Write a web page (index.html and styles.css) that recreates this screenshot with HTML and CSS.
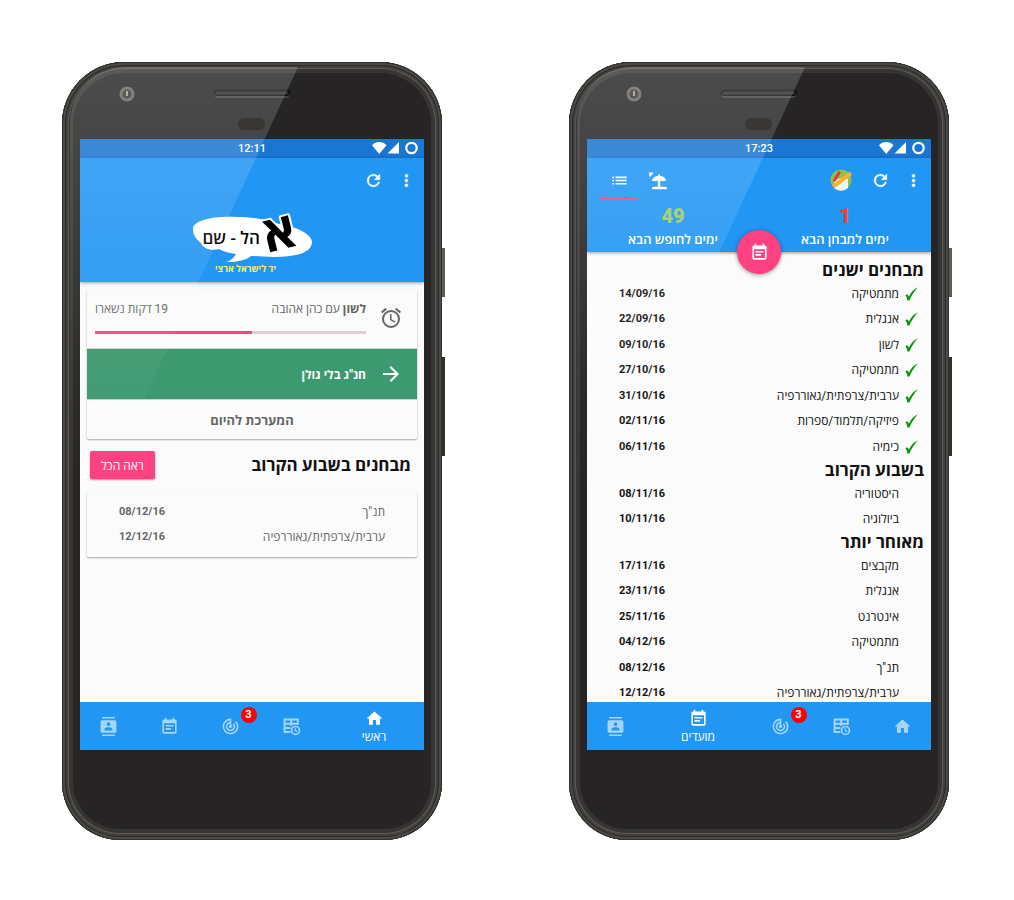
FILE: index.html
```html
<!DOCTYPE html>
<html lang="he">
<head>
<meta charset="utf-8">
<meta name="viewport" content="width=device-width, initial-scale=1">
<title>אהל - שם</title>
<link rel="stylesheet" href="styles.css">
</head>
<body>
<svg class="sprite" aria-hidden="true">
  <symbol id="i-refresh" viewBox="0 0 24 24"><path d="M17.65 6.35A7.96 7.96 0 0 0 12 4a8 8 0 1 0 7.73 10h-2.08A6 6 0 1 1 12 6c1.66 0 3.14.69 4.22 1.78L13 11h7V4z" stroke="currentColor" stroke-width=".6"/></symbol>
  <symbol id="i-more" viewBox="0 0 24 24"><path d="M12 8a2 2 0 1 0 0-4 2 2 0 0 0 0 4zm0 2a2 2 0 1 0 0 4 2 2 0 0 0 0-4zm0 6a2 2 0 1 0 0 4 2 2 0 0 0 0-4z" stroke="currentColor" stroke-width=".5"/></symbol>
  <symbol id="i-home" viewBox="0 0 24 24"><path d="M10 20v-6h4v6h5v-8h3L12 3 2 12h3v8z"/></symbol>
  <symbol id="i-contacts" viewBox="0 0 24 24"><path d="M20 0H4v2h16V0zM4 24h16v-2H4v2zM20 4H4a2 2 0 0 0-2 2v12c0 1.100.9 2 2 2h16a2 2 0 0 0 2-2V6a2 2 0 0 0-2-2zm-8 2.750a2.250 2.250 0 1 1 0 4.500 2.250 2.250 0 0 1 0-4.500zM17 17H7v-1.500c0-1.670 3.330-2.500 5-2.500s5 .830 5 2.500V17z"/></symbol>
  <symbol id="i-event" viewBox="0 0 24 24"><path d="M17 10H7v2h10v-2zm2-7h-1V1h-2v2H8V1H6v2H5a2 2 0 0 0-2 2v14c0 1.100.9 2 2 2h14a2 2 0 0 0 2-2V5a2 2 0 0 0-2-2zm0 16H5V8h14v11zm-5-5H7v2h7v-2z"/></symbol>
  <symbol id="i-track" viewBox="0 0 24 24"><path d="M19.070 4.930l-1.410 1.410A8 8 0 1 1 11 4.070v2.020a6 6 0 1 0 5.240 1.670l-1.410 1.410A4 4 0 1 1 11 8.140v2.140a2 2 0 1 0 2 0V2h-1a10 10 0 1 0 7.070 2.930z"/></symbol>
  <symbol id="i-table" viewBox="0 0 24 24"><path d="M10.500 19H3.200V3.200H20V10M3 8.600h17M3 13.800h7.500M11.600 3v8.500" fill="none" stroke="currentColor" stroke-width="2.400"/><circle cx="17" cy="17" r="5" fill="none" stroke="currentColor" stroke-width="2.200"/><path d="M16.800 14.200v3l2.200 1.500" fill="none" stroke="currentColor" stroke-width="1.600"/></symbol>
  <symbol id="i-alarm" viewBox="0 0 24 24"><path d="M22 5.720l-4.600-3.860-1.290 1.530 4.600 3.860L22 5.720zM7.880 3.390L6.600 1.860 2 5.710l1.290 1.530 4.590-3.850zM12.500 8H11v6l4.750 2.850.75-1.230-4-2.370V8zM12 4a9 9 0 1 0 0 18 9 9 0 0 0 0-18zm0 16a7 7 0 1 1 0-14 7 7 0 0 1 0 14z"/></symbol>
  <symbol id="i-arrow" viewBox="0 0 24 24"><path d="M12 4l-1.410 1.410L16.170 11H4v2h12.170l-5.580 5.590L12 20l8-8z"/></symbol>
  <symbol id="i-list" viewBox="0 0 24 24"><path d="M3 9h2V7H3v2zm0 4h2v-2H3v2zm0 4h2v-2H3v2zm4 0h14v-2H7v2zm0-4h14v-2H7v2zm0-6v2h14V7H7z"/></symbol>
  <symbol id="i-beach" viewBox="0 0 24 24"><path d="M1 2h6L5 5 2 8zM5 13c0-4 4-6.500 8-7V4h2v2c4 .5 8 3 8 7-1-1-3-1-4 0-1-1-2.500-1-3.500-.5V20H22c1 0 2 1 2 2v1H5v-1c0-1 1-2 2-2h5.500v-7.500C11.500 12 10 12 9 13c-1-1-3-1-4 0z"/></symbol>
  <symbol id="i-tick" viewBox="0 0 13 14"><path d="M.3 8.500C1.800 6.800 3.100 7.100 3.900 9.700 6 5.500 8.600 2.200 12.800 .3 9.300 4 6.600 8.500 4.400 13.600H2.400C2.100 11 1.600 9.500.3 8.500z"/></symbol>
  <symbol id="i-status" viewBox="0 0 46 14"><path d="M0 4.200C4-.2 10.500-.2 14.500 4.200L7.200 13zM27 1v11.500H15.500z"/><circle cx="39.500" cy="7" r="5.200" fill="none" stroke="currentColor" stroke-width="2.200"/></symbol>
  <symbol id="bezel" viewBox="0 0 380 77">
    <circle cx="65" cy="32" r="7.500" fill="#6a6866"/><circle cx="65" cy="32" r="4.500" fill="#3a3836"/><path d="M65 29v5" stroke="#a19f8d" stroke-width="2"/>
    <rect x="152.500" y="28.500" width="75" height="5" rx="2.500" fill="#302e2d" stroke="#0f0e0e" stroke-width="1.500"/><path d="M153 33.500q1 1.500 3 1.500h68q2 0 3-1.500" fill="none" stroke="#6a6865"/>
    <rect x="176" y="56" width="27" height="12" rx="6" fill="#14120e"/>
  </symbol>
</svg>

<main class="page">
  <section class="phone" aria-label="ראשי">
    <svg class="bezel" aria-hidden="true"><use href="#bezel"/></svg>
    <div class="screen" dir="rtl">
      <div class="status"><span>12:11</span><svg class="status-icons" aria-hidden="true"><use href="#i-status"/></svg></div>
      <header class="appbar">
        <div class="toolbar">
          <button class="tool" aria-label="עוד"><svg class="icon"><use href="#i-more"/></svg></button>
          <button class="tool" aria-label="רענון"><svg class="icon"><use href="#i-refresh"/></svg></button>
        </div>
        <svg class="logo" viewBox="0 0 126 66" direction="rtl">
          <path fill="#fff" d="M4 19C4 11 22 6 48 7c14 0 30 2 42 7 16 2 33 10 33 18 0 11-17 15-38 15-8 0-16-1-23-1-5 4-13 6-25 6 4-1 8-4 10-8-6-1-12-2-17-5-8 2-16 0-18-6-5-4-8-8-8-14z"/>
          <text class="logo-aleph" x="107" y="40" transform="rotate(-14 89 25)">א</text>
          <text class="logo-name" x="71" y="34">הל - שם</text>
          <text class="logo-sub" x="87" y="62">יד לישראל ארצי</text>
        </svg>
      </header>
      <div class="content">
        <div class="card">
          <div class="lesson">
            <svg class="icon-lg"><use href="#i-alarm"/></svg>
            <div class="lesson-body">
              <div class="lesson-text"><span><b>לשון</b> עם כהן אהובה</span><span>19 דקות נשארו</span></div>
              <progress class="bar" dir="ltr" max="100" value="58" aria-label="19 דקות נשארו"></progress>
            </div>
          </div>
          <div class="lesson lesson-next">
            <svg class="icon-lg"><use href="#i-arrow"/></svg>
            <b>חנ"ג בלי גולן</b>
          </div>
          <button class="card-action">המערכת להיום</button>
        </div>
        <div class="section-head"><h2 class="heading">מבחנים בשבוע הקרוב</h2><button class="see-all">ראה הכל</button></div>
        <div class="card card-exams">
          <table class="exams">
            <tr><td class="tick"></td><td>תנ"ך</td><td class="date">08/12/16</td></tr>
            <tr><td class="tick"></td><td>ערבית/צרפתית/גאוררפיה</td><td class="date">12/12/16</td></tr>
          </table>
        </div>
      </div>
      <nav class="nav">
        <a class="nav-item active" href="#home"><svg class="icon"><use href="#i-home"/></svg><span>ראשי</span></a>
        <a class="nav-item" href="#table" aria-label="מערכת"><svg class="icon"><use href="#i-table"/></svg></a>
        <a class="nav-item" href="#track" aria-label="עדכונים"><svg class="icon"><use href="#i-track"/></svg><span class="badge">3</span></a>
        <a class="nav-item" href="#dates" aria-label="מועדים"><svg class="icon"><use href="#i-event"/></svg></a>
        <a class="nav-item" href="#contacts" aria-label="אנשי קשר"><svg class="icon"><use href="#i-contacts"/></svg></a>
      </nav>
    </div>
  </section>

  <section class="phone" aria-label="מועדים">
    <svg class="bezel" aria-hidden="true"><use href="#bezel"/></svg>
    <div class="screen" dir="rtl">
      <div class="status"><span>17:23</span><svg class="status-icons" aria-hidden="true"><use href="#i-status"/></svg></div>
      <header class="appbar">
        <div class="toolbar">
          <button class="tool" aria-label="עוד"><svg class="icon"><use href="#i-more"/></svg></button>
          <button class="tool" aria-label="רענון"><svg class="icon"><use href="#i-refresh"/></svg></button>
          <button class="tool tool-wide" aria-label="ציוד">
            <svg class="supplies" viewBox="0 0 22 22"><circle cx="11" cy="11" r="10.500" fill="#8bc34a"/><path d="M4 11l4-1 4-1 6 1v9a10.500 10.500 0 0 1-14 0z" fill="#f5f5f5"/><path d="M8.500 2l-5 8-.3 3.500 2.800-1.700 5-8.300z" fill="#e53935"/><path d="M20 2.500l1.800 3.500L5 19l-3-3z" fill="#fbb034"/></svg>
          </button>
          <div class="tabs">
            <button class="tab" aria-label="חופשות"><svg class="icon"><use href="#i-beach"/></svg></button>
            <button class="tab selected" aria-label="רשימה"><svg class="icon"><use href="#i-list"/></svg></button>
          </div>
        </div>
        <div class="counters">
          <div class="counter"><strong class="count count-exam">1</strong><span>ימים למבחן הבא</span></div>
          <div class="counter"><strong class="count count-rest">49</strong><span>ימים לחופש הבא</span></div>
        </div>
        <button class="fab" aria-label="לוח מועדים"><svg class="icon"><use href="#i-event"/></svg></button>
      </header>
      <div class="content content-list">
        <h2 class="heading">מבחנים ישנים</h2>
        <table class="exams">
          <tr><td class="tick"><svg><use href="#i-tick"/></svg></td><td>מתמטיקה</td><td class="date">14/09/16</td></tr>
          <tr><td class="tick"><svg><use href="#i-tick"/></svg></td><td>אנגלית</td><td class="date">22/09/16</td></tr>
          <tr><td class="tick"><svg><use href="#i-tick"/></svg></td><td>לשון</td><td class="date">09/10/16</td></tr>
          <tr><td class="tick"><svg><use href="#i-tick"/></svg></td><td>מתמטיקה</td><td class="date">27/10/16</td></tr>
          <tr><td class="tick"><svg><use href="#i-tick"/></svg></td><td>ערבית/צרפתית/גאוררפיה</td><td class="date">31/10/16</td></tr>
          <tr><td class="tick"><svg><use href="#i-tick"/></svg></td><td>פיזיקה/תלמוד/ספרות</td><td class="date">02/11/16</td></tr>
          <tr><td class="tick"><svg><use href="#i-tick"/></svg></td><td>כימיה</td><td class="date">06/11/16</td></tr>
        </table>
        <h2 class="heading">בשבוע הקרוב</h2>
        <table class="exams">
          <tr><td class="tick"></td><td>היסטוריה</td><td class="date">08/11/16</td></tr>
          <tr><td class="tick"></td><td>ביולוגיה</td><td class="date">10/11/16</td></tr>
        </table>
        <h2 class="heading">מאוחר יותר</h2>
        <table class="exams">
          <tr><td class="tick"></td><td>מקבצים</td><td class="date">17/11/16</td></tr>
          <tr><td class="tick"></td><td>אנגלית</td><td class="date">23/11/16</td></tr>
          <tr><td class="tick"></td><td>אינטרנט</td><td class="date">25/11/16</td></tr>
          <tr><td class="tick"></td><td>מתמטיקה</td><td class="date">04/12/16</td></tr>
          <tr><td class="tick"></td><td>תנ"ך</td><td class="date">08/12/16</td></tr>
          <tr><td class="tick"></td><td>ערבית/צרפתית/גאוררפיה</td><td class="date">12/12/16</td></tr>
        </table>
      </div>
      <nav class="nav">
        <a class="nav-item" href="#home" aria-label="ראשי"><svg class="icon"><use href="#i-home"/></svg></a>
        <a class="nav-item" href="#table" aria-label="מערכת"><svg class="icon"><use href="#i-table"/></svg></a>
        <a class="nav-item" href="#track" aria-label="עדכונים"><svg class="icon"><use href="#i-track"/></svg><span class="badge">3</span></a>
        <a class="nav-item active" href="#dates"><svg class="icon"><use href="#i-event"/></svg><span>מועדים</span></a>
        <a class="nav-item" href="#contacts" aria-label="אנשי קשר"><svg class="icon"><use href="#i-contacts"/></svg></a>
      </nav>
    </div>
  </section>
</main>
</body>
</html>
```

FILE: styles.css
```css
* { box-sizing: border-box; }
body { margin: 0; background: #fff; font-family: Roboto, "Open Sans", "Noto Sans", sans-serif; font-size: 12px; }
button { font: inherit; color: inherit; border: 0; background: none; padding: 0; cursor: pointer; }
svg { display: block; fill: currentColor; }
.sprite { position: absolute; width: 0; height: 0; }

.page { display: flex; justify-content: center; align-items: flex-start; gap: 127px; padding: 62px 3px 60px 0; }

/* Device */
.phone {
  position: relative; flex: 0 1 380px; padding-bottom: 90px;
  background: #262425; border-radius: 62px 62px 58px 58px;
  box-shadow: inset 0 0 0 1px #33312e, inset 0 0 0 3px #4c4a47, inset 0 0 0 4px #2c2a28, inset 0 0 0 6px #43413d, inset 0 0 0 7px #5c5a57, inset 0 0 0 11px #373533;
}
.phone::before {
  content: ""; position: absolute; z-index: 3; inset: 5px 8px 8px; border-radius: 56px;
  pointer-events: none;
  background: linear-gradient(rgba(255,255,255,.18), rgba(255,255,255,.12) 18%, rgba(255,255,255,.03) 42%, rgba(255,255,255,0) 56%);
  clip-path: polygon(0 0, 228px 0, 0 492px);
}
.phone::after {
  content: ""; position: absolute; left: 100%; top: 186px; width: 3px; height: 208px;
  background: linear-gradient(#5c5a57 49px, transparent 49px, transparent 109px, #33312e 109px);
}
.bezel { width: 100%; height: 77px; }
.screen {
  position: relative; display: flex; flex-direction: column; overflow: hidden;
  margin: 0 18px; aspect-ratio: 344 / 611; background: #fbfbfb; color: #111;
}

/* Top bars */
.status { position: relative; flex: none; display: flex; justify-content: center; align-items: center; height: 19px; background: #1976d2; color: #fff; font-size: 11px; font-weight: 500; }
.status-icons { position: absolute; right: 6px; top: 2px; width: 46px; height: 14px; }
.appbar { position: relative; z-index: 2; flex: none; background: #2196f3; color: #fff; box-shadow: 0 1px 3px rgba(0,0,0,.4); }
.toolbar { display: flex; align-items: center; height: 44px; padding: 0 1px; }
.tool { display: grid; place-items: center; width: 33px; height: 44px; }
.tool-wide { width: 46px; }
.icon { width: 19px; height: 19px; }
.icon-lg { flex: none; width: 24px; height: 24px; }
.supplies { width: 22px; height: 22px; }
.tabs { display: flex; margin-right: auto; padding-left: 12px; }
.tab { display: grid; place-items: center; width: 38px; height: 38px; border-bottom: 2px solid transparent; border-top: 2px solid transparent; }
.tab.selected { border-bottom-color: #ff4081; }
.logo { width: 126px; height: 66px; margin: 8px auto 6px; overflow: visible; }
.logo-aleph { font: bold 50px "Open Sans", "Noto Sans", sans-serif; fill: #000; stroke: #fff; stroke-width: 4px; paint-order: stroke; stroke-linejoin: round; }
.logo-name { font: 600 17px "Open Sans", "Noto Sans", sans-serif; fill: #000; }
.logo-sub { font: bold 9px "Open Sans", "Noto Sans", sans-serif; fill: #ffee58; }

.counters { display: grid; grid-template-columns: 1fr 1fr; height: 50px; }
.counter { display: flex; flex-direction: column; align-items: center; font-size: 13px; font-weight: 600; line-height: 18px; }
.count { font-size: 20px; line-height: 29px; }
.count-exam { color: #f44336; }
.count-rest { color: #9ccc65; }
.fab { position: absolute; left: 50%; top: 100%; display: grid; place-items: center; width: 44px; height: 44px; margin: -22px; border-radius: 50%; background: #ff4081; box-shadow: 0 1px 4px rgba(0,0,0,.4); }

/* Content */
.content { flex: 1; min-height: 0; overflow: hidden; padding: 7px; }
.content-list { padding: 8px 0 0; }
.heading { margin: 0; font-size: 17px; line-height: 21px; font-weight: 700; color: #111; }
.content-list .heading { padding: 0 7px; }
.card { border-radius: 2px; background: #fbfbfb; color: #666; box-shadow: 0 1px 2px rgba(0,0,0,.35); }
.lesson { display: flex; align-items: center; gap: 13px; height: 59px; padding: 0 14px 2px 8px; }
.lesson-body { flex: 1; display: flex; flex-direction: column; gap: 14px; }
.lesson-text { display: flex; justify-content: space-between; line-height: 16px; }
.lesson b { font-weight: 700; }
.bar { display: block; width: 100%; height: 3px; border: 0; appearance: none; background: #e8ccd3; }
.bar::-webkit-progress-bar { background: #e8ccd3; }
.bar::-webkit-progress-value { background: #ff4081; }
.lesson-next { height: 52px; padding-bottom: 0; background: #3d9970; color: #fff; border-top: 1px solid #c4d4cc; border-bottom: 1px solid #c4d4cc; }
.card-action { width: 100%; height: 39px; font-size: 13px; font-weight: 700; }
.section-head { display: flex; justify-content: space-between; align-items: center; padding: 12px 6px 12px 3px; }
.see-all { height: 28px; padding: 0 11px; border-radius: 2px; background: #ff4081; color: #fff; box-shadow: 0 1px 2px rgba(0,0,0,.4); }
.card-exams { padding: 8px 0 7px; }
.exams { width: 100%; border-collapse: collapse; line-height: 16px; }
.exams tr { height: 25px; }
.exams tr:nth-child(even), .exams tr:last-child { height: 26px; }
.exams td { padding: 0; }
.exams .tick { width: 32px; }
.tick svg { width: 13px; height: 14px; margin-right: 13px; color: #0a930a; }
.exams .date { padding-left: 32px; text-align: left; direction: ltr; font-size: 11px; font-weight: 700; }

/* Bottom navigation */
.nav { flex: none; display: flex; height: 48px; margin: 0 -2px; background: #2196f3; }
.nav-item { position: relative; flex: 61 1 0; display: flex; flex-direction: column; align-items: center; justify-content: center; gap: 1px; color: rgba(255,255,255,.6); text-decoration: none; line-height: 16px; }
.nav-item.active { flex-grow: 104; color: #fff; padding-top: 1px; }
.badge { position: absolute; left: 50%; top: 5px; width: 16px; height: 16px; margin-left: 10px; border-radius: 50%; background: #f00; color: #fff; text-align: center; font-size: 11px; font-weight: 700; }
```
